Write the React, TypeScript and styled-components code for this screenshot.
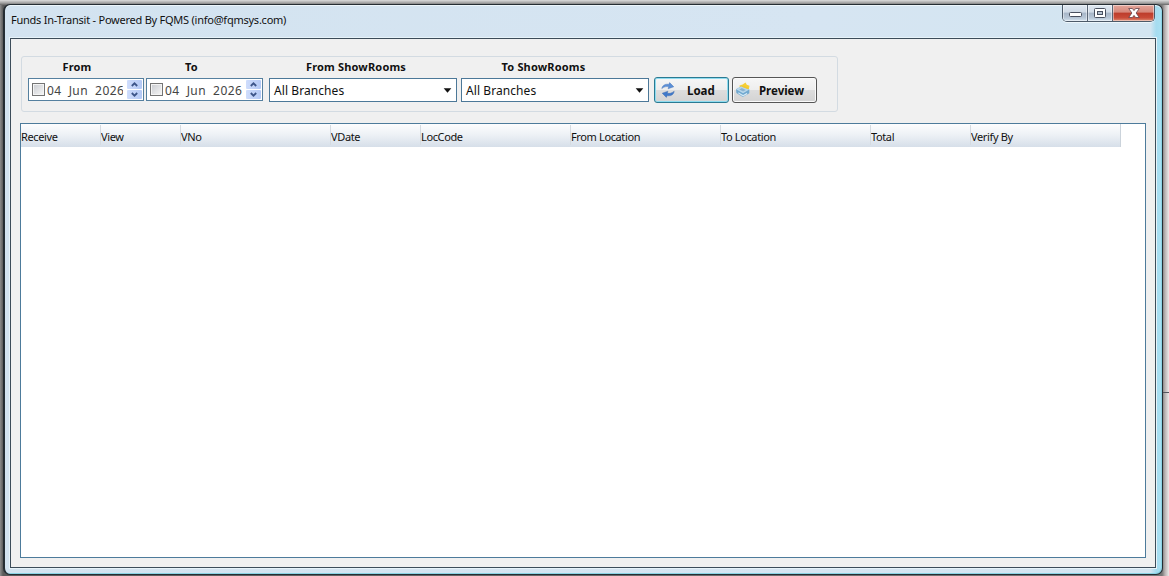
import React from "react";
import styled, { createGlobalStyle } from "styled-components";

const Global = createGlobalStyle`
  *, *::before, *::after { box-sizing: border-box; }
  html, body, #root { margin: 0; height: 100%; overflow: hidden; }
  body { font-family: "Noto Sans", "Open Sans", sans-serif; color: #111; }
`;

const Desktop = styled.div`
  position: relative;
  width: 1169px;
  height: 576px;
  padding: 4px 6px 1px 3px;
  background: linear-gradient(90deg, #8c8c8c 0, #5a5a5a 3px, #777 1162px, #b9b3b3 1165px, #eeeaea 1169px);
  &::before {
    content: "";
    position: absolute;
    inset: 0 0 auto 0;
    height: 5px;
    background: linear-gradient(#dcdcdc, #a0a0a0 60%, #666);
  }
  &::after {
    content: "";
    position: absolute;
    right: 0;
    top: 392px;
    width: 6px;
    height: 1px;
    background: #55565f;
  }
`;

const Window = styled.main`
  position: relative;
  display: flex;
  flex-direction: column;
  width: 1160px;
  height: 571px;
  padding: 0 6px 6px 5px;
  border: 1px solid #252d33;
  border-left-width: 2px;
  border-radius: 7px;
  background: linear-gradient(90deg, #d3e3f0 0, #d6e5f2 70%, #d3e5f1 99%, #a6dcf0 99.5%, #a9e0f2 100%);
  box-shadow: inset 0 1px 0 #edf6fb, inset -1px -1px 0 #8ad3e4;
`;

const TitleBar = styled.header`
  display: flex;
  justify-content: space-between;
  flex: none;
  height: 33px;
  padding: 0 1px;
`;

const Title = styled.h1`
  margin: 6px 0 0;
  font-size: 11px;
  line-height: 18px;
  font-weight: 400;
  letter-spacing: -0.24px;
  white-space: nowrap;
`;

const Controls = styled.div`
  display: flex;
  width: 93px;
  height: 17px;
  border: 1px solid #4d5a69;
  border-top: 0;
  border-radius: 0 0 5px 5px;
  overflow: hidden;
  box-shadow: 0 1px 0 #edf6fb;
`;

const Control = styled.button<{ $w: number; $close?: boolean }>`
  display: flex;
  align-items: center;
  justify-content: center;
  width: ${(p) => p.$w}px;
  height: 16px;
  padding: 0;
  border: 0;
  border-right: ${(p) => (p.$close ? "0" : "1px solid #596575")};
  background: ${(p) =>
    p.$close
      ? "linear-gradient(#e3a69b 0, #d6877a 45%, #bd3c2b 50%, #c94b38 80%, #df8f75)"
      : "linear-gradient(#dfe8f1 0, #cfd9e5 45%, #a6b5c7 50%, #b7c6d6 80%, #d5e3ef)"};
  box-shadow: inset 0 0 0 1px rgba(255, 255, 255, 0.45);
`;

const Client = styled.section`
  flex: 1;
  min-height: 0;
  display: flex;
  flex-direction: column;
  padding: 17px 9px 9px;
  border: 1px solid #3c4c59;
  background: #f0f0f0;
  box-shadow: 0 0 0 1px #e7f3f9;
`;

const Filters = styled.div`
  display: flex;
  align-items: flex-start;
  width: 817px;
  height: 56px;
  margin-left: 1px;
  padding: 1px 6px 0;
  border: 1px solid #d3dbe2;
  border-radius: 3px;
`;

const Field = styled.div<{ $w: number; $gap: number }>`
  width: ${(p) => p.$w}px;
  margin-right: ${(p) => p.$gap}px;
`;

const Label = styled.div<{ $shift: number }>`
  height: 20px;
  padding-right: ${(p) => p.$shift}px;
  text-align: center;
  font-size: 11px;
  line-height: 17px;
  font-weight: 700;
  letter-spacing: 0.17px;
  white-space: nowrap;
`;

const DateBox = styled.div`
  display: flex;
  align-items: center;
  height: 23px;
  padding: 0 1px 0 3px;
  border: 1px solid #55809f;
  background: #fff;
`;

const Check = styled.span`
  flex: none;
  width: 13px;
  height: 13px;
  border: 1px solid #747474;
  background: linear-gradient(135deg, #c9cbd0, #f7f7f7);
  box-shadow: inset 0 0 0 1px #f4f4f4;
`;

const DateText = styled.span<{ $clip: number }>`
  width: ${(p) => p.$clip}px;
  margin-left: 2px;
  margin-right: auto;
  overflow: hidden;
  font-size: 12px;
  line-height: 19px;
  letter-spacing: 0.42px;
  padding-top: 2px;
  color: #444;
  white-space: pre;
`;

const Spinner = styled.span`
  display: flex;
  flex-direction: column;
  gap: 1px;
`;

const Spin = styled.span`
  display: flex;
  align-items: center;
  justify-content: center;
  width: 15px;
  height: 9px;
  border-radius: 1px;
  background: linear-gradient(90deg, #cfddfc, #b4c9f5);
`;

const Combo = styled.div`
  display: flex;
  align-items: center;
  justify-content: space-between;
  height: 24px;
  padding: 1px 4px 0 4px;
  border: 1px solid #4c7898;
  background: #fff;
  font-size: 12px;
  line-height: 22px;
  letter-spacing: 0.08px;
  white-space: nowrap;
`;

const Action = styled.button<{ $w: number; $gap?: number; $active?: boolean }>`
  display: flex;
  align-items: center;
  width: ${(p) => p.$w}px;
  height: 26px;
  margin: 19px ${(p) => p.$gap || 0}px 0 0;
  padding: 0 0 0 ${(p) => (p.$active ? 6 : 2)}px;
  border: 1px solid ${(p) => (p.$active ? "#2b7a92" : "#555")};
  border-radius: 3px;
  background: linear-gradient(#f6f6f6 0, #eeeeee 48%, #dddddd 52%, #d3d3d3);
  box-shadow: inset 0 0 0 1px ${(p) => (p.$active ? "#8edcf0" : "#fafafa")};
  color: #111;
  font: 700 12px/22px "Noto Sans", sans-serif;
  font-size: 11.5px;
  letter-spacing: ${(p) => (p.$active ? 0 : -0.02)}px;
  span { margin-left: ${(p) => (p.$active ? 12 : 8)}px; padding-top: 1px; }
`;

const Grid = styled.div`
  flex: none;
  width: 1126px;
  height: 435px;
  margin-top: 11px;
  border: 1px solid #4d7b9b;
  background: #fff;
`;

const HeadRow = styled.div`
  display: flex;
  width: 1100px;
  height: 23px;
  background: linear-gradient(#fdfdfe, #eef2f6 45%, #d6dfe9);
  border-right: 1px solid #cbd3db;
`;

const Head = styled.div<{ $w: number }>`
  position: relative;
  flex: none;
  width: ${(p) => p.$w}px;
  padding-top: 4px;
  font-size: 11px;
  line-height: 17px;
  letter-spacing: -0.37px;
  white-space: nowrap;
  &:not(:first-child)::before {
    content: "";
    position: absolute;
    left: -1px;
    top: 1px;
    width: 1px;
    height: 20px;
    background: #d5dbe1;
  }
`;

const columns: [string, number][] = [
  ["Receive", 80], ["View", 80], ["VNo", 150], ["VDate", 90], ["LocCode", 150],
  ["From Location", 150], ["To Location", 150], ["Total", 100], ["Verify By", 149],
];

const Chevron = ({ up }: { up?: boolean }) => (
  <svg width="7" height="5" viewBox="0 0 7 5">
    <path d={up ? "M.8 4 3.5 1.3 6.2 4" : "M.8 1 3.5 3.7 6.2 1"} fill="none" stroke="#3d5689" strokeWidth="1.8" />
  </svg>
);

const Arrow = () => (
  <svg width="9" height="5" viewBox="0 0 9 5"><path d="M.7.3h7.6L4.5 4.7z" fill="#111" /></svg>
);

const RefreshIcon = () => (
  <svg width="14" height="16" viewBox="0 0 14 16">
    <path d="M.8 6.6C1.2 3.2 4.5 1.6 7.8 2.4L8.6.6l4.2 4.2-5.7 2 .6-2C5 4.3 3 4.8.8 6.6z" fill="#5b8fd6" stroke="#3b69b2" strokeWidth=".4" />
    <path d="M13.2 9.2c-.4 3.6-3.7 5.2-7 4.4l-.8 1.8-4.2-4.2 5.7-2-.6 2c2.7.5 4.7-.2 6.9-2z" fill="#4079ca" stroke="#3462a9" strokeWidth=".4" />
  </svg>
);

const PreviewIcon = () => (
  <svg width="16" height="16" viewBox="0 0 16 16">
    <path d="m4.5 3.4 3.2-.8L10.5.4l1.3 2.4 2.7 1-1 5.4L5 6.6z" fill="#f6cf35" />
    <path d="m1 7.3 5.5-3 7.8 3.3v3.7L7.8 15 1.4 11z" fill="#70a8cf" />
    <path d="m1 7.3 5.5-3 7.8 3.3-6.2 3.6z" fill="#b9d8eb" />
    <path d="m6 4.6 2.6-1 4.2 2.1.4 1.5z" fill="#f3c72e" />
    <path d="m4.2 7.4 2.7-1.4 4 1.9-2.8 1.6z" fill="#8bb3d0" />
    <path d="m3.3 10.2 4.8 2.7 4-2.2v1.5L8 14.4l-4.7-2.9z" fill="#d5e9f4" />
  </svg>
);

const DateField = ({ clip }: { clip: number }) => (
  <DateBox>
    <Check />
    <DateText $clip={clip}>{"04  Jun  2026"}</DateText>
    <Spinner><Spin><Chevron up /></Spin><Spin><Chevron /></Spin></Spinner>
  </DateBox>
);

export default function App() {
  return (
    <>
      <Global />
      <Desktop>
        <Window>
          <TitleBar>
            <Title>Funds In-Transit - Powered By FQMS (info@fqmsys.com)</Title>
            <Controls>
              <Control $w={25} aria-label="Minimize">
                <svg width="13" height="7" viewBox="0 0 13 7"><rect x=".5" y="2.5" width="12" height="4" rx="1" fill="#fff" stroke="#49505f" /></svg>
              </Control>
              <Control $w={25} aria-label="Maximize">
                <svg width="12" height="10" viewBox="0 0 12 10"><rect x=".5" y=".5" width="11" height="9" rx="1" fill="#fff" stroke="#49505f" /><rect x="3.5" y="3.5" width="5" height="3" fill="#b6c3d1" stroke="#49505f" /></svg>
              </Control>
              <Control $w={41} $close aria-label="Close">
                <svg width="12" height="10" viewBox="0 0 12 10"><path d="M.7.5h3.7L6 2.6 7.6.5h3.7L8.1 5l3.2 4.5H7.6L6 7.4 4.4 9.5H.7L3.9 5z" fill="#fff" stroke="#64434a" strokeWidth=".8" /></svg>
              </Control>
            </Controls>
          </TitleBar>
          <Client>
            <Filters>
              <Field $w={116} $gap={2}><Label $shift={18}>From</Label><DateField clip={76} /></Field>
              <Field $w={117} $gap={6}><Label $shift={26}>To</Label><DateField clip={79} /></Field>
              <Field $w={188} $gap={4}><Label $shift={14}>From ShowRooms</Label><Combo>All Branches<Arrow /></Combo></Field>
              <Field $w={188} $gap={5}><Label $shift={23}>To ShowRooms</Label><Combo>All Branches<Arrow /></Combo></Field>
              <Action $w={75} $gap={3} $active><RefreshIcon /><span>Load</span></Action>
              <Action $w={85}><PreviewIcon /><span>Preview</span></Action>
            </Filters>
            <Grid>
              <HeadRow>{columns.map(([name, w]) => <Head key={name} $w={w}>{name}</Head>)}</HeadRow>
            </Grid>
          </Client>
        </Window>
      </Desktop>
    </>
  );
}
